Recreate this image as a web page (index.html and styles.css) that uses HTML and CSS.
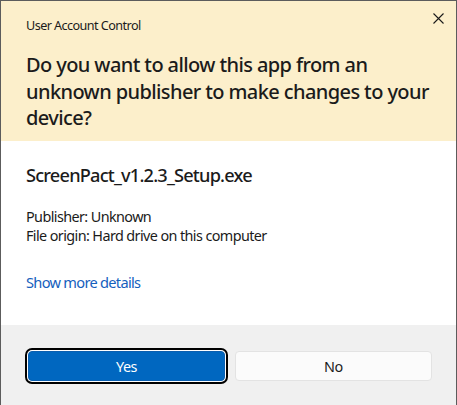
FILE: index.html
```html
<!DOCTYPE html>
<html lang="en">
<head>
<meta charset="utf-8">
<title>User Account Control</title>
<link rel="stylesheet" href="styles.css">
</head>
<body>
<div class="dialog">
  <header class="top">
    <div class="titlebar">
      <span class="title">User Account Control</span>
      <button class="close" aria-label="Close">
        <svg width="11" height="11" viewBox="0 0 11 11"><path d="M0.5 0.5 L10.5 10.5 M10.5 0.5 L0.5 10.5" stroke="#1a1a1a" stroke-width="1.1" fill="none"/></svg>
      </button>
    </div>
    <h1 class="question">Do you want to allow this app from an unknown publisher to make changes to your device?</h1>
  </header>
  <section class="details">
    <div class="app-name">ScreenPact_v1.2.3_Setup.exe</div>
    <div class="meta">
      <p>Publisher: Unknown</p>
      <p>File origin: Hard drive on this computer</p>
    </div>
    <a class="more" href="#">Show more details</a>
  </section>
  <footer class="actions">
    <button class="btn primary">Yes</button>
    <button class="btn secondary">No</button>
  </footer>
</div>
</body>
</html>
```
FILE: styles.css
```css
* { box-sizing: border-box; }
html, body { margin: 0; padding: 0; }
body {
  width: 457px;
  height: 405px;
  overflow: hidden;
  font-family: "Noto Sans", "Open Sans", sans-serif;
  color: #1b1b1b;
  background: #f0f0f0;
}
.dialog {
  width: 457px;
  height: 405px;
  border: 1px solid #5c5c5c;
  border-bottom: none;
  display: flex;
  flex-direction: column;
}
.top {
  background: #fcefcb;
  height: 140px;
  padding: 0 0 0 25px;
}
.titlebar {
  display: flex;
  align-items: flex-start;
  justify-content: space-between;
  height: 38px;
}
.title {
  font-size: 12.6px;
  letter-spacing: -0.55px;
  margin-top: 16px;
}
.close {
  border: none;
  background: transparent;
  padding: 0;
  margin: 12px 12px 0 0;
  width: 11px;
  height: 11px;
  display: flex;
}
.question {
  margin: 13px 0 0 0;
  font-size: 20px;
  font-weight: 500;
  line-height: 26.7px;
  letter-spacing: -0.6px;
  padding-right: 14px;
}
.details {
  background: #ffffff;
  height: 184px;
  padding: 22px 25px 0 25px;
  display: flex;
  flex-direction: column;
}
.app-name {
  font-size: 18.2px;
  font-weight: 500;
  line-height: 24px;
  letter-spacing: -0.8px;
}
.meta {
  margin-top: 20px;
  font-size: 14.4px;
  line-height: 19px;
  letter-spacing: -0.6px;
}
.meta p { margin: 0; }
.more {
  margin-top: 28px;
  font-size: 14.6px;
  line-height: 18px;
  letter-spacing: -0.7px;
  color: #1560bd;
  text-decoration: none;
  align-self: flex-start;
}
.actions {
  flex: 1;
  background: #f0f0f0;
  display: grid;
  grid-template-columns: 1fr 1fr;
  gap: 10px;
  padding: 26px 24px 0 27px;
  align-items: start;
}
.btn {
  height: 30px;
  font-family: inherit;
  font-size: 14.4px;
  letter-spacing: -0.4px;
  border-radius: 4px;
}
.primary {
  background: #0067c0;
  color: #ffffff;
  border: 1px solid #0a5fb0;
  box-shadow: 0 0 0 1px #ffffff, 0 0 0 3px #000000;
}
.secondary {
  background: #fbfbfb;
  color: #1b1b1b;
  border: 1px solid #e3e3e3;
}
```
